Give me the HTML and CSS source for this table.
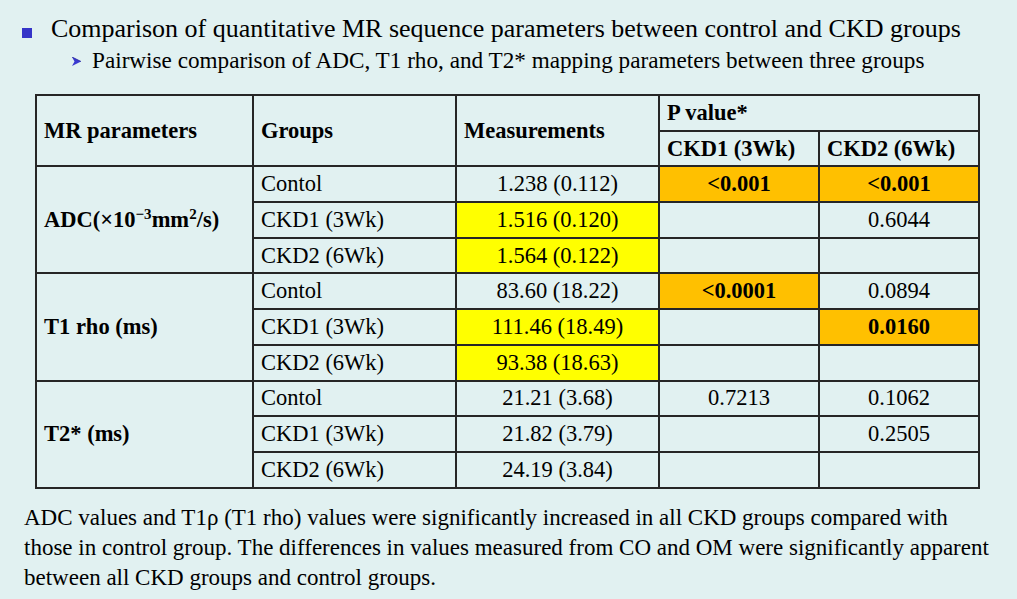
FILE: index.html
```html
<!DOCTYPE html>
<html>
<head>
<meta charset="utf-8">
<link rel="stylesheet" href="styles.css">
</head>
<body>
<div class="slide">
  <div class="title-row">
    <span class="sq-bullet"></span>
    <span class="title">Comparison of quantitative MR sequence parameters between control and CKD groups</span>
  </div>
  <div class="sub-row">
    <svg class="arrow" width="9" height="9" viewBox="0 0 9 9"><polygon points="0,0 9,4.5 0,9 2.5,4.5" fill="#3a3ad0"/><polyline points="0,0 9,4.5" stroke="#1e1e9a" stroke-width="0.8" fill="none"/></svg>
    <span class="subtitle">Pairwise comparison of ADC, T1 rho, and T2* mapping parameters between three groups</span>
  </div>
  <table class="data">
    <colgroup>
      <col class="c1"><col class="c2"><col class="c3"><col class="c4"><col class="c5">
    </colgroup>
    <tr>
      <th rowspan="2">MR parameters</th>
      <th rowspan="2">Groups</th>
      <th rowspan="2">Measurements</th>
      <th colspan="2">P value*</th>
    </tr>
    <tr>
      <th>CKD1 (3Wk)</th>
      <th>CKD2 (6Wk)</th>
    </tr>
    <tr>
      <td rowspan="3" class="param">ADC(×10<sup>−3</sup>mm<sup>2</sup>/s)</td>
      <td>Contol</td>
      <td class="num">1.238 (0.112)</td>
      <td class="num orange bold">&lt;0.001</td>
      <td class="num orange bold">&lt;0.001</td>
    </tr>
    <tr>
      <td>CKD1 (3Wk)</td>
      <td class="num yellow">1.516 (0.120)</td>
      <td class="num"></td>
      <td class="num">0.6044</td>
    </tr>
    <tr>
      <td>CKD2 (6Wk)</td>
      <td class="num yellow">1.564 (0.122)</td>
      <td class="num"></td>
      <td class="num"></td>
    </tr>
    <tr>
      <td rowspan="3" class="param">T1 rho (ms)</td>
      <td>Contol</td>
      <td class="num">83.60 (18.22)</td>
      <td class="num orange bold">&lt;0.0001</td>
      <td class="num">0.0894</td>
    </tr>
    <tr>
      <td>CKD1 (3Wk)</td>
      <td class="num yellow">111.46 (18.49)</td>
      <td class="num"></td>
      <td class="num orange bold">0.0160</td>
    </tr>
    <tr>
      <td>CKD2 (6Wk)</td>
      <td class="num yellow">93.38 (18.63)</td>
      <td class="num"></td>
      <td class="num"></td>
    </tr>
    <tr>
      <td rowspan="3" class="param">T2* (ms)</td>
      <td>Contol</td>
      <td class="num">21.21 (3.68)</td>
      <td class="num">0.7213</td>
      <td class="num">0.1062</td>
    </tr>
    <tr>
      <td>CKD1 (3Wk)</td>
      <td class="num">21.82 (3.79)</td>
      <td class="num"></td>
      <td class="num">0.2505</td>
    </tr>
    <tr>
      <td>CKD2 (6Wk)</td>
      <td class="num">24.19 (3.84)</td>
      <td class="num"></td>
      <td class="num"></td>
    </tr>
  </table>
  <p class="note">ADC values and T1ρ (T1 rho) values were significantly increased in all CKD groups compared with those in control group. The differences in values measured from CO and OM were significantly apparent between all CKD groups and control groups.</p>
</div>
</body>
</html>
```
FILE: styles.css
```css
html, body {
  margin: 0;
  padding: 0;
  background: #e1f1f1;
}
body {
  font-family: "Liberation Serif", "Times New Roman", serif;
  color: #000;
  width: 1017px;
  height: 599px;
  overflow: hidden;
}
.slide {
  padding: 12px 0 0 0;
}
.title-row {
  display: flex;
  align-items: center;
  height: 34px;
  padding-left: 22px;
}
.sq-bullet {
  display: inline-block;
  width: 10px;
  height: 10px;
  background: #3535c8;
  margin-right: 19px;
  margin-top: 7px;
}
.title {
  font-size: 26px;
  line-height: 30px;
}
.sub-row {
  display: flex;
  align-items: center;
  height: 28px;
  padding-left: 72px;
}
.arrow {
  margin-right: 11px;
  margin-top: 3px;
}
.subtitle {
  font-size: 23.2px;
  line-height: 26px;
}
table.data {
  margin: 20px 0 0 35px;
  border-collapse: collapse;
  table-layout: fixed;
  width: 943px;
  border: 2px solid #262626;
}
col.c1 { width: 217px; }
col.c2 { width: 203px; }
col.c3 { width: 203px; }
col.c4 { width: 160px; }
col.c5 { width: 160px; }
table.data tr {
  height: 35.7px;
}
table.data th,
table.data td {
  border: 2px solid #262626;
  padding: 0 7px;
  font-size: 22.5px;
  line-height: 26px;
  text-align: left;
  vertical-align: middle;
  white-space: nowrap;
}
table.data th {
  font-weight: bold;
}
table.data td.param {
  font-weight: bold;
}
table.data td.param sup {
  font-size: 15px;
  line-height: 0;
  vertical-align: 8px;
}
table.data td.num {
  text-align: center;
}
table.data td.bold {
  font-weight: bold;
}
table.data td.yellow {
  background: #ffff00;
}
table.data td.orange {
  background: #ffc000;
}
.note {
  margin: 14px 0 0 24px;
  width: 975px;
  font-size: 23px;
  line-height: 30px;
}
```
